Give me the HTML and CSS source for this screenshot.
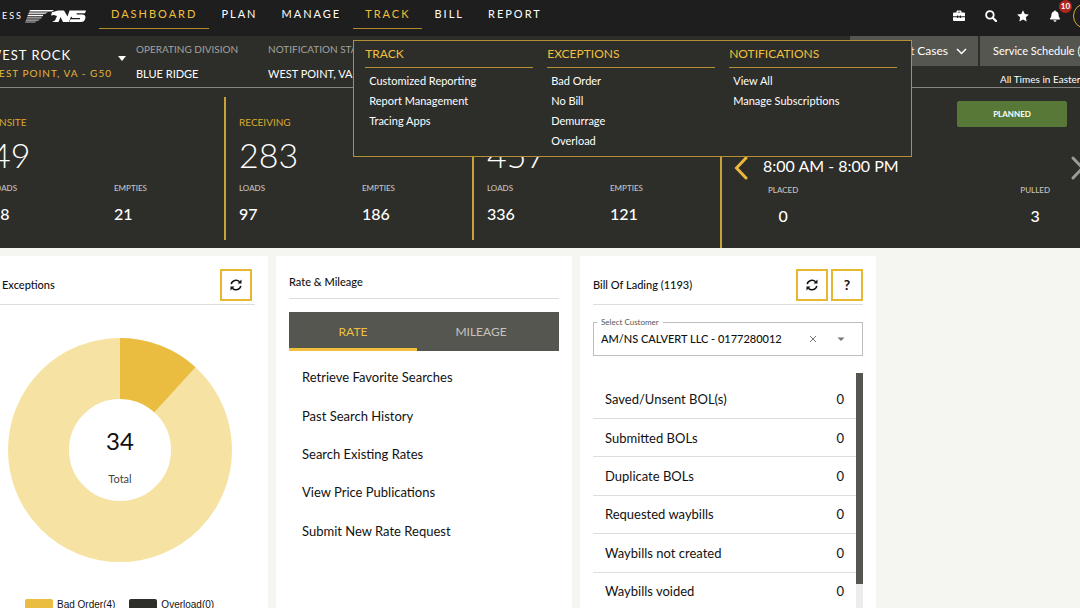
FILE: index.html
```html
<!DOCTYPE html>
<html lang="en">
<head>
    <meta charset="UTF-8">
    <meta name="viewport" content="width=device-width, initial-scale=1.0">
    <title>AccessNS Dashboard</title>
    <link rel="stylesheet" href="styles.css">
</head>
<body>

<svg class="sprite" aria-hidden="true">
    <symbol id="icon-refresh" viewBox="0 0 12 12">
        <path d="M1.200 5.200A4.900 4.900 0 0 1 9.600 2.800M10.800 6.800A4.900 4.900 0 0 1 2.400 9.200" fill="none" stroke="currentColor" stroke-width="1.500"/>
        <path d="M11.500 0.600V4.600H7.500zM0.500 11.400V7.400H4.500z"/>
    </symbol>
</svg>

<header class="topbar">
    <a class="brand" href="#">
        <span class="brand-name">ACCESS</span>
        <svg class="brand-logo" viewBox="0 0 62 13" role="img" aria-label="NS">
            <path d="M5 0H29L27 1.4H4.3zM4 2.4H23L20 3.8H3.3zM3 4.8H18.500L17.500 6.200H2.300z" fill="#fff"/>
            <path d="M2.100 7.200H17L16 8.600H1.500zM1.200 9.500H15L13 10.800H0.700zM0.500 11.500H11.500L10 12.500H0z" fill="#bbb"/>
            <path d="M27 2.200L33 0.500H39L42.500 6.500L44.500 0.500H61L60 3.200H51.500L51.800 4.500H58Q61 5 60.300 8.500Q59.500 12 56 12H44.500L45.500 9.200H55L55 8H47.500L46 6.500L44 12H38L35.500 7L33.500 12H27L30 10.500L32 6L29 5L26 5.500Z" fill="#fff"/>
        </svg>
    </a>

    <nav>
        <ul class="nav">
            <li><a class="active" href="#">DASHBOARD</a></li>
            <li><a href="#">PLAN</a></li>
            <li><a href="#">MANAGE</a></li>
            <li>
                <a class="active" href="#">TRACK</a>
                <div class="dropdown">
                    <section>
                        <h3>TRACK</h3>
                        <a href="#">Customized Reporting</a>
                        <a href="#">Report Management</a>
                        <a href="#">Tracing Apps</a>
                    </section>
                    <section>
                        <h3>EXCEPTIONS</h3>
                        <a href="#">Bad Order</a>
                        <a href="#">No Bill</a>
                        <a href="#">Demurrage</a>
                        <a href="#">Overload</a>
                    </section>
                    <section>
                        <h3>NOTIFICATIONS</h3>
                        <a href="#">View All</a>
                        <a href="#">Manage Subscriptions</a>
                    </section>
                </div>
            </li>
            <li><a href="#">BILL</a></li>
            <li><a href="#">REPORT</a></li>
        </ul>
    </nav>

    <div class="tools">
        <button type="button" aria-label="Toolbox">
            <svg viewBox="0 0 12 12"><path d="M3.500 2.500V1.600Q3.500 0.600 4.500 0.600H7.500Q8.500 0.600 8.500 1.600V2.500H11Q12 2.500 12 3.500V6.300H8V5.500H6.800V6.300H5.200V5.500H4V6.300H0V3.500Q0 2.500 1 2.500zM4.800 2.500H7.200V1.800H4.800zM0 7.200H4V8H5.200V7.200H6.800V8H8V7.200H12V10.200Q12 11 11 11H1Q0 11 0 10.200z"/></svg>
        </button>
        <button type="button" aria-label="Search">
            <svg viewBox="0 0 12 12"><path d="M7.800 7.800L11 11" fill="none" stroke="currentColor" stroke-width="2.200" stroke-linecap="round"/><circle cx="4.900" cy="4.900" r="3.800" fill="none" stroke="currentColor" stroke-width="1.800"/></svg>
        </button>
        <button type="button" aria-label="Favorites">
            <svg viewBox="0 0 12 12"><path d="M6 0.200L7.800 3.900L11.900 4.500L8.900 7.300L9.600 11.400L6 9.500L2.400 11.400L3.100 7.300L0.100 4.500L4.200 3.900z"/></svg>
        </button>
        <button type="button" aria-label="Alerts">
            <svg viewBox="0 0 12 12"><path d="M6 0.200Q6.700 0.200 6.700 1.200Q9.600 1.900 9.600 5Q9.600 7.300 11 8.500Q11.300 9.300 10.500 9.400H1.500Q0.700 9.300 1 8.500Q2.400 7.300 2.400 5Q2.400 1.900 5.300 1.200Q5.300 0.200 6 0.200zM4.500 10.200H7.500Q7.300 11.700 6 11.700Q4.700 11.700 4.500 10.200z"/></svg>
            <span class="badge">10</span>
        </button>
        <a class="avatar" href="#" aria-label="Account"></a>
    </div>
</header>

<div class="account">
    <div class="customer">
        <div class="customer-text">
            <strong>WEST ROCK</strong>
            <span>WEST POINT, VA - G50</span>
        </div>
        <button type="button" aria-label="Change customer"></button>
    </div>
    <dl class="facts">
        <div>
            <dt>OPERATING DIVISION</dt>
            <dd>BLUE RIDGE</dd>
        </div>
        <div>
            <dt>NOTIFICATION STATION</dt>
            <dd>WEST POINT, VA</dd>
        </div>
    </dl>
    <div class="account-side">
        <div class="account-actions">
            <button type="button" class="cases">Support Cases
                <svg viewBox="0 0 11 7"><path d="M1 1L5.500 5.500L10 1" fill="none" stroke="currentColor" stroke-width="1.500"/></svg>
            </button>
            <button type="button" class="schedule">Service Schedule (</button>
        </div>
        <p>All Times in Eastern</p>
    </div>
</div>

<section class="stats">
    <article class="stat">
        <h2>ONSITE</h2>
        <p class="total">49</p>
        <dl>
            <div><dt>LOADS</dt><dd>28</dd></div>
            <div><dt>EMPTIES</dt><dd>21</dd></div>
        </dl>
    </article>
    <article class="stat">
        <h2>RECEIVING</h2>
        <p class="total">283</p>
        <dl>
            <div><dt>LOADS</dt><dd>97</dd></div>
            <div><dt>EMPTIES</dt><dd>186</dd></div>
        </dl>
    </article>
    <article class="stat">
        <h2>ENROUTE</h2>
        <p class="total">457</p>
        <dl>
            <div><dt>LOADS</dt><dd>336</dd></div>
            <div><dt>EMPTIES</dt><dd>121</dd></div>
        </dl>
    </article>
    <article class="plan">
        <button type="button" class="planned">PLANNED</button>
        <div class="shift">
            <button type="button" aria-label="Previous shift">
                <svg viewBox="0 0 14 24"><path d="M12 2L2.500 12L12 22" fill="none" stroke="currentColor" stroke-width="3" stroke-linecap="round"/></svg>
            </button>
            <span>8:00 AM - 8:00 PM</span>
            <button type="button" class="next" aria-label="Next shift">
                <svg viewBox="0 0 14 24"><path d="M2 2L11.500 12L2 22" fill="none" stroke="currentColor" stroke-width="3" stroke-linecap="round"/></svg>
            </button>
        </div>
        <dl>
            <div><dt>PLACED</dt><dd>0</dd></div>
            <div><dt>PULLED</dt><dd>3</dd></div>
        </dl>
    </article>
</section>

<main class="cards">
    <section class="card exceptions">
        <div class="card-head">
            <h2>Exceptions</h2>
            <button type="button" class="square" aria-label="Refresh exceptions"><svg><use href="#icon-refresh"/></svg></button>
        </div>
        <svg class="donut" viewBox="0 0 224 224" role="img" aria-label="34 exceptions in total">
            <circle cx="112" cy="112" r="81.500" fill="none" stroke="#f6e3a3" stroke-width="61"/>
            <path d="M112 0A112 112 0 0 1 187.400 29.200L146.300 74.300A51 51 0 0 0 112 61z" fill="#eabc40"/>
            <text x="112" y="112" class="donut-total">34</text>
            <text x="112" y="145" class="donut-label">Total</text>
        </svg>
        <ul class="legend">
            <li><i class="bad"></i>Bad Order(4)</li>
            <li><i class="over"></i>Overload(0)</li>
        </ul>
    </section>

    <section class="card rates">
        <div class="card-head">
            <h2>Rate &amp; Mileage</h2>
        </div>
        <div class="tabs">
            <button type="button" class="selected">RATE</button>
            <button type="button">MILEAGE</button>
        </div>
        <ul class="links">
            <li><a href="#">Retrieve Favorite Searches</a></li>
            <li><a href="#">Past Search History</a></li>
            <li><a href="#">Search Existing Rates</a></li>
            <li><a href="#">View Price Publications</a></li>
            <li><a href="#">Submit New Rate Request</a></li>
        </ul>
    </section>

    <section class="card lading">
        <div class="card-head">
            <h2>Bill Of Lading (1193)</h2>
            <button type="button" class="square" aria-label="Refresh bills"><svg><use href="#icon-refresh"/></svg></button>
            <button type="button" class="square">?</button>
        </div>
        <fieldset class="field">
            <legend><label for="customer">Select Customer</label></legend>
            <input type="text" id="customer" value="AM/NS CALVERT LLC - 0177280012">
            <button type="button" aria-label="Clear">
                <svg viewBox="0 0 8 8"><path d="M1 1L7 7M7 1L1 7" stroke="currentColor"/></svg>
            </button>
            <button type="button" aria-label="Open list">
                <svg viewBox="0 0 8 8"><path d="M0.500 2.500H7.500L4 6z"/></svg>
            </button>
        </fieldset>
        <div class="scroller">
            <table>
                <tr><th scope="row">Saved/Unsent BOL(s)</th><td>0</td></tr>
                <tr><th scope="row">Submitted BOLs</th><td>0</td></tr>
                <tr><th scope="row">Duplicate BOLs</th><td>0</td></tr>
                <tr><th scope="row">Requested waybills</th><td>0</td></tr>
                <tr><th scope="row">Waybills not created</th><td>0</td></tr>
                <tr><th scope="row">Waybills voided</th><td>0</td></tr>
            </table>
            <div class="track"><div class="thumb"></div></div>
        </div>
    </section>
</main>

</body>
</html>
```
FILE: styles.css
```css
* {
    box-sizing: border-box;
}
body {
    margin: 0;
    height: 100vh;
    overflow: hidden;
    display: flex;
    flex-direction: column;
    font-family: Lato, "Open Sans", sans-serif;
    font-size: 11px;
    line-height: 16px;
    color: #111;
    background-color: #f5f6f1;
    white-space: nowrap;
}
h2, h3, p, ul, dl, dd {
    margin: 0;
    padding: 0;
    font-weight: inherit;
    font-size: inherit;
}
ul {
    list-style: none;
}
a {
    color: inherit;
    text-decoration: none;
}
button {
    padding: 0;
    border: none;
    background: none;
    color: inherit;
    font: inherit;
    cursor: pointer;
}
svg {
    display: block;
    fill: currentColor;
}
.sprite {
    position: absolute;
    width: 0;
    height: 0;
}

/* Top bar */
.topbar {
    flex: none;
    display: flex;
    height: 36px;
    color: #fff;
    background-color: #1e1e1e;
}
.brand {
    flex: none;
    display: flex;
    justify-content: flex-end;
    gap: 2px;
    width: 99px;
    padding: 8px 12px 0 0;
}
.brand-name {
    font-size: 9px;
    letter-spacing: 2px;
}
.brand-logo {
    flex: none;
    width: 62px;
    height: 13px;
    margin-top: 2px;
}
.nav {
    display: flex;
}
.nav li {
    position: relative;
}
.nav li > a {
    display: block;
    height: 29px;
    padding: 6px 12px 0;
    letter-spacing: 2px;
    border-bottom: 1px solid transparent;
}
.nav li > .active {
    color: #f0c03c;
    border-color: #b38a28;
}
.dropdown {
    position: absolute;
    z-index: 2;
    top: 40px;
    left: 0;
    display: flex;
    gap: 14px;
    height: 117px;
    padding: 5px 14px 0 11px;
    border: 1px solid #b38f35;
    background-color: #2d2d29;
}
.dropdown section {
    width: 168px;
}
.dropdown h3 {
    height: 22px;
    margin-bottom: 3px;
    font-size: 12px;
    color: #f0c03c;
    border-bottom: 1px solid #b38f35;
}
.dropdown a {
    display: block;
    padding-left: 4px;
    line-height: 20px;
}
.tools {
    display: flex;
    gap: 20px;
    margin-left: auto;
    padding-top: 3px;
}
.tools button {
    position: relative;
    width: 12px;
    height: 25px;
}
.tools svg {
    width: 12px;
    height: 12px;
}
.badge {
    position: absolute;
    top: -3px;
    left: 10px;
    width: 13px;
    height: 13px;
    border-radius: 50%;
    font-size: 8px;
    font-weight: 700;
    line-height: 13px;
    background-color: #b3261e;
}
.avatar {
    width: 26px;
    height: 26px;
    margin: 0 -19px 0 -8px;
    border: 1px solid #d9a92f;
    border-radius: 50%;
}

/* Account bar */
.account {
    flex: none;
    display: flex;
    height: 52px;
    color: #fff;
    background-color: #2d2d29;
    border-bottom: 1px solid #85857f;
}
.customer {
    flex: none;
    display: flex;
    justify-content: flex-end;
    width: 136px;
    padding: 11px 10px 0 0;
}
.customer-text {
    margin-right: 6px;
}
.customer strong {
    display: block;
    margin-bottom: 2px;
    font-size: 13px;
    font-weight: 400;
    letter-spacing: 1px;
}
.customer span {
    display: block;
    font-size: 10px;
    letter-spacing: 1px;
    color: #e5b73b;
}
.customer button {
    align-self: flex-start;
    margin-top: 9px;
    border: 4px solid transparent;
    border-top: 5px solid #fff;
    border-bottom: none;
}
.facts {
    display: flex;
    padding-top: 5px;
    font-size: 10px;
}
.facts div {
    width: 132px;
}
.facts dt {
    margin-bottom: 9px;
    color: #a3a39f;
}
.facts dd {
    font-size: 11px;
}
.account-side {
    width: 230px;
    margin-left: auto;
    overflow: hidden;
}
.account-actions {
    display: flex;
    gap: 2px;
    font-size: 12px;
}
.account-actions button {
    height: 30px;
    background-color: #555650;
}
.cases {
    flex: none;
    display: flex;
    align-items: center;
    justify-content: flex-end;
    gap: 8px;
    width: 128px;
    padding-right: 11px;
}
.cases svg {
    width: 11px;
    height: 7px;
}
.schedule {
    flex: 1;
    min-width: 0;
    padding-left: 13px;
    text-align: left;
    font-size: 11px;
}
.account-side p {
    margin: 5px 0 0 150px;
    font-size: 10px;
}

/* Railcar totals */
.stats {
    flex: none;
    display: flex;
    height: 160px;
    margin-left: -22px;
    color: #fff;
    background-color: #2d2d29;
}
.stat {
    flex: none;
    width: 248px;
    height: 143px;
    margin-top: 9px;
    padding: 17px 0 0 13px;
    border-right: 2px solid #c9a136;
}
.stat:nth-child(3) {
    height: 151px;
}
.stat h2 {
    font-size: 10px;
    color: #dba92f;
}
.total {
    font-size: 34px;
    font-weight: 300;
    line-height: 50px;
}
.stats dl {
    display: flex;
    font-size: 8px;
}
.stat dl div {
    flex: none;
    width: 123px;
}
.stat dl div:last-child {
    width: 100px;
}
.stats dt {
    font-weight: 500;
    color: #c4c4c0;
}
.stats dd {
    margin-top: 8px;
    font-size: 16px;
    font-weight: 500;
    line-height: 20px;
}
.plan {
    flex: 1;
    padding: 13px 13px 0 12px;
}
.planned {
    display: block;
    width: 110px;
    height: 26px;
    margin: 0 0 29px auto;
    border-radius: 2px;
    font-size: 8px;
    font-weight: 700;
    background-color: #577836;
}
.shift {
    display: flex;
    align-items: center;
    margin-right: -18px;
    font-size: 16px;
    height: 24px;
}
.shift svg {
    width: 14px;
    height: 24px;
}
.shift button {
    color: #eab93a;
}
.shift span {
    margin-left: 15px;
    padding-bottom: 4px;
}
.shift .next {
    margin-left: auto;
    color: #9a9a96;
}
.plan dl {
    justify-content: space-between;
    padding: 2px 17px 0 34px;
    text-align: center;
}

/* Cards */
.cards {
    flex: 1;
    min-height: 0;
    display: flex;
    gap: 8px;
    margin: 8px 0 0 -28px;
}
.card {
    flex: none;
    display: flex;
    flex-direction: column;
    width: 296px;
    padding: 0 13px;
    background-color: #fff;
}
.card-head {
    flex: none;
    display: flex;
    align-items: center;
    gap: 3px;
    height: 49px;
    padding-top: 9px;
    border-bottom: 1px solid #dedede;
}
.card-head h2 {
    flex: 1;
    font-weight: 500;
}
.square {
    display: flex;
    align-items: center;
    justify-content: center;
    width: 32px;
    height: 32px;
    border: 2px solid #e8b731;
    font-size: 14px;
    font-weight: 700;
}
.square svg {
    width: 12px;
    height: 12px;
}
.exceptions .card-head {
    padding-right: 3px;
    padding-left: 17px;
}
.donut {
    flex: none;
    width: 224px;
    height: 224px;
    margin: 33px 0 0 23px;
}
.donut-total, .donut-label {
    text-anchor: middle;
}
.donut-total {
    font-size: 24px;
}
.donut-label {
    fill: #444;
}
.legend {
    display: flex;
    gap: 14px;
    margin: 35px 0 0 40px;
    font-family: "Liberation Sans", Arial, sans-serif;
    font-size: 10px;
}
.legend li {
    display: flex;
    align-items: center;
    gap: 4px;
}
.legend i {
    width: 28px;
    height: 12px;
    border-radius: 2px;
    background-color: #eabc40;
}
.legend .over {
    background-color: #2d2d29;
}
.rates .card-head {
    height: 43px;
}
.tabs {
    display: flex;
    height: 39px;
    margin-top: 13px;
    font-size: 12px;
    color: #c4c4c0;
    background-color: #555650;
}
.tabs button {
    width: 128px;
    border-top: 3px solid transparent;
    border-bottom: 3px solid transparent;
}
.tabs .selected {
    color: #f0c03c;
    border-bottom-color: #f0c03c;
}
.links {
    display: grid;
    grid-auto-rows: 1fr;
    align-items: center;
    height: 192px;
    margin-top: 7px;
    padding-left: 13px;
    font-size: 13px;
}
.field {
    display: flex;
    align-items: center;
    flex: none;
    height: 39px;
    margin: 12px 0 0;
    padding: 4px 17px 4px 3px;
    border: 1px solid #bdbdbd;
}
.field legend {
    padding: 0 4px;
    font-size: 8px;
    line-height: 10px;
    color: #555;
}
.field input {
    flex: 1;
    min-width: 0;
    padding: 0 0 0 4px;
    border: none;
    outline: none;
    font: inherit;
    font-weight: 500;
    color: inherit;
}
.field button {
    margin-left: 20px;
    color: #777;
}
.field svg {
    width: 8px;
    height: 8px;
}
.scroller {
    flex: 1;
    min-height: 0;
    display: flex;
    margin-top: 17px;
}
table {
    flex: 1;
    height: 230px;
    margin-top: 8px;
    border-collapse: collapse;
    font-size: 13px;
}
tr {
    border-bottom: 1px solid #dedede;
}
th, td {
    padding: 0 12px;
    font-weight: inherit;
    text-align: left;
}
td {
    text-align: right;
}
.track {
    width: 7px;
    background-color: #ededed;
}
.thumb {
    height: 211px;
    background-color: #555650;
}
```
